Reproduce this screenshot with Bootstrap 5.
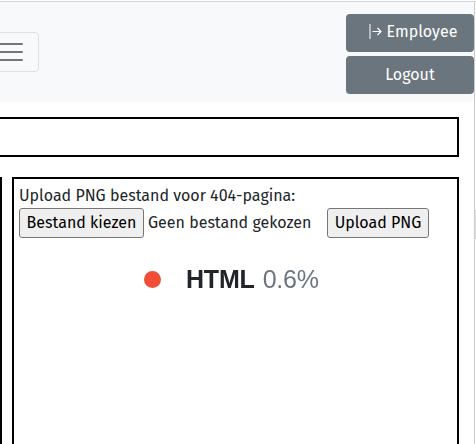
<!DOCTYPE html>
<html lang="nl">
<head>
<meta charset="utf-8">
<meta name="viewport" content="width=device-width, initial-scale=1">
<title>Upload</title>
<link href="https://cdn.jsdelivr.net/npm/bootstrap@5.3.0/dist/css/bootstrap.min.css" rel="stylesheet">
<style>
body{font-family:"Fira Sans","Noto Sans",sans-serif;font-size:16px;line-height:24px;color:#212529;height:444px;overflow:hidden}
.page-view{width:475px;height:443px;border-right:1px solid #ccc}
.window-frame{height:443px;margin-top:1px;border-top:1px solid #d5d7d9}
.scroll-edge{width:1px;height:237px;border-bottom:29px solid #ddd}
.top-nav{height:100px;padding:12px 0 0;background:#f8f9fa}
.menu-toggle{width:56px;height:40px;margin:18px 0 0 -17px;border:1px solid #dee0e1;border-radius:4px;padding:0 12px}
.menu-toggle svg{display:block;margin-top:-1px}
.account-btns{width:128px;gap:4px}
.account-btns .btn{--bs-btn-bg:#6b757d;height:38px;padding:6px 0;font-size:16px;line-height:24px;border:0;border-radius:4px}
.account-btns .role-btn{padding-left:5px}
.strip{height:40px;width:470px;margin:15px 0 20px -11px;border:2px solid #000}
.panels{gap:10px;height:270px}
.left-panel{width:2px;background:#000}
.upload-panel{width:447px;border:2px solid #000;padding:5px 5px 0}
.native-btn{height:30px;border:1px solid #767676;border-radius:3px;background:#efefef;color:#000;padding:0;line-height:26px}
.txt{display:inline-block;white-space:nowrap}
.language{font-family:"Liberation Sans",Arial,sans-serif;font-size:25px;line-height:30px;letter-spacing:-.2px;margin:26px 0 0 125px;filter:blur(.6px)}
.dot{width:17px;height:17px;border-radius:50%;background:#f04d37;margin-right:25px}
</style>
<script src="https://cdn.jsdelivr.net/npm/bootstrap@5.3.0/dist/js/bootstrap.bundle.min.js"></script>
</head>
<body class="bg-white">
<div class="window-frame d-flex">
<div class="page-view overflow-hidden">
  <nav class="top-nav d-flex justify-content-between align-items-start">
    <button class="menu-toggle bg-transparent" aria-label="Menu">
      <svg width="30" height="30" viewBox="0 0 30 30" stroke="#747678" stroke-width="2" stroke-linecap="round"><path d="M4 7h22M4 15h22M4 23h22"/></svg>
    </button>
    <div class="account-btns d-flex flex-column">
      <button class="btn btn-secondary role-btn d-flex justify-content-center"><svg class="me-1 mt-1" width="15" height="18" viewBox="0 0 15 18" fill="none" stroke="#fff"><path d="M2 0v15" stroke-opacity=".6" stroke-width="1.7"/><path d="M4.5 7.5h8.5M9.5 4l3.5 3.5L9.5 11" stroke-width="1.2"/></svg><span class="txt">Employee</span></button>
      <button class="btn btn-secondary"><span class="txt">Logout</span></button>
    </div>
  </nav>
  <div class="strip"></div>
  <div class="panels d-flex">
    <div class="left-panel"></div>
    <main class="upload-panel">
      <div class="txt">Upload PNG bestand voor 404-pagina:</div>
      <div class="d-flex align-items-center">
        <button class="native-btn" style="width:125px"><span class="txt">Bestand kiezen</span></button>
        <span class="txt ms-1" style="width:179px">Geen bestand gekozen</span>
        <button class="native-btn" style="width:102px"><span class="txt">Upload PNG</span></button>
      </div>
      <div class="language d-flex align-items-center">
        <span class="dot"></span><b>HTML</b><span class="ms-2 text-secondary">0.6%</span>
      </div>
    </main>
  </div>
</div>
<div class="scroll-edge"></div>
</div>
</body>
</html>
